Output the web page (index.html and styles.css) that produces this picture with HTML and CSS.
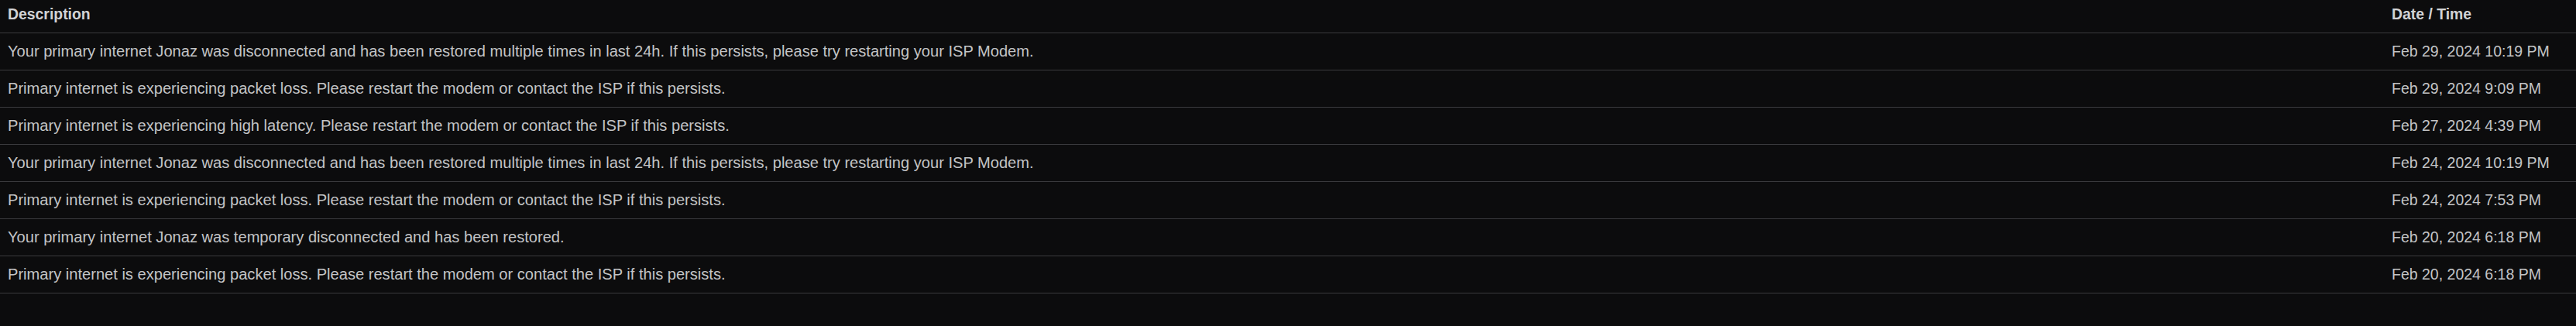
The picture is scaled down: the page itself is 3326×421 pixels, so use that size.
FILE: index.html
```html
<!DOCTYPE html>
<html lang="en">
<head>
<meta charset="utf-8">
<title>Alerts</title>
<link rel="stylesheet" href="styles.css">
</head>
<body>
<table class="log">
  <colgroup>
    <col class="col-desc">
    <col class="col-date">
  </colgroup>
  <thead>
    <tr>
      <th>Description</th>
      <th>Date / Time</th>
    </tr>
  </thead>
  <tbody>
    <tr><td>Your primary internet Jonaz was disconnected and has been restored multiple times in last 24h. If this persists, please try restarting your ISP Modem.</td><td class="date">Feb 29, 2024 10:19 PM</td></tr>
    <tr><td>Primary internet is experiencing packet loss. Please restart the modem or contact the ISP if this persists.</td><td class="date">Feb 29, 2024 9:09 PM</td></tr>
    <tr><td>Primary internet is experiencing high latency. Please restart the modem or contact the ISP if this persists.</td><td class="date">Feb 27, 2024 4:39 PM</td></tr>
    <tr><td>Your primary internet Jonaz was disconnected and has been restored multiple times in last 24h. If this persists, please try restarting your ISP Modem.</td><td class="date">Feb 24, 2024 10:19 PM</td></tr>
    <tr><td>Primary internet is experiencing packet loss. Please restart the modem or contact the ISP if this persists.</td><td class="date">Feb 24, 2024 7:53 PM</td></tr>
    <tr><td>Your primary internet Jonaz was temporary disconnected and has been restored.</td><td class="date">Feb 20, 2024 6:18 PM</td></tr>
    <tr><td>Primary internet is experiencing packet loss. Please restart the modem or contact the ISP if this persists.</td><td class="date">Feb 20, 2024 6:18 PM</td></tr>
  </tbody>
</table>
</body>
</html>
```

FILE: styles.css
```css
html, body {
  margin: 0;
  padding: 0;
  background: #0c0c0d;
}

body {
  width: 3326px;
  height: 421px;
  font-family: "Liberation Sans", Arial, sans-serif;
  font-size: 20px;
  color: #c3c4c6;
}

.log {
  width: 100%;
  border-collapse: collapse;
  table-layout: fixed;
}

.col-date {
  width: 248px;
}

.log th,
.log td {
  text-align: left;
  padding: 0 10px;
  line-height: 24px;
  white-space: nowrap;
  overflow: hidden;
}

.log th {
  height: 42px;
  box-sizing: border-box;
  padding-top: 6px;
  padding-bottom: 12px;
  font-size: 19.4px;
  font-weight: bold;
  color: #d2d3d5;
  border-bottom: 1px solid #3a3a3d;
}

.log td {
  height: 47px;
  box-sizing: border-box;
  padding-top: 11px;
  padding-bottom: 12px;
  font-size: 20.1px;
  border-bottom: 1px solid #3a3a3d;
}

.log td.date {
  font-size: 19.5px;
}
```
